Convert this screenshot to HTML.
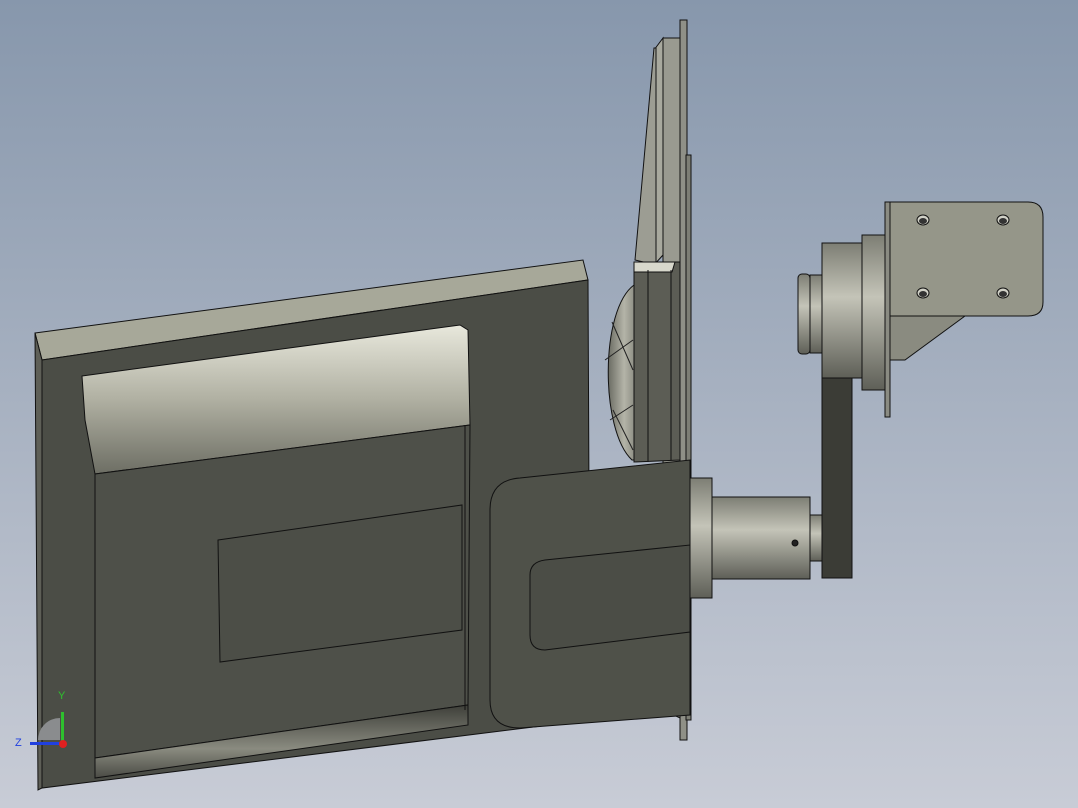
<!DOCTYPE html>
<html><head><style>html,body{margin:0;padding:0;width:1078px;height:808px;overflow:hidden}</style></head>
<body>
<svg width="1078" height="808" viewBox="0 0 1078 808" xmlns="http://www.w3.org/2000/svg" stroke="#111" stroke-width="1">
<defs>
<linearGradient id="bg" x1="0" y1="0" x2="0" y2="1"><stop offset="0" stop-color="#8797ac"/><stop offset="1" stop-color="#c8ccd6"/></linearGradient>
<linearGradient id="cyl" x1="0" y1="0" x2="0" y2="1"><stop offset="0" stop-color="#7d7e74"/><stop offset="0.4" stop-color="#c4c4b8"/><stop offset="1" stop-color="#5e5f57"/></linearGradient>
<linearGradient id="curve" x1="0" y1="0" x2="0" y2="1"><stop offset="0" stop-color="#e8e8dc"/><stop offset="0.5" stop-color="#b0b0a2"/><stop offset="1" stop-color="#6d6e64"/></linearGradient>
<linearGradient id="strip" x1="0" y1="0" x2="0" y2="1"><stop offset="0" stop-color="#3e3f39"/><stop offset="0.6" stop-color="#8a8b80"/><stop offset="1" stop-color="#4a4b45"/></linearGradient>
<linearGradient id="sph" x1="0" y1="0" x2="1" y2="0"><stop offset="0" stop-color="#6b6c63"/><stop offset="0.5" stop-color="#b4b4a8"/><stop offset="1" stop-color="#7a7b72"/></linearGradient>
</defs>
<rect width="1078" height="808" fill="url(#bg)" stroke="none"/>
<polygon points="680,20 687,20 687,740 680,740" fill="#8f9087"/>
<polygon points="663,38 680,38 680,718 663,710" fill="#999a90"/>
<polygon points="654,50 663,38 663,255 654,265" fill="#a8a99e"/>
<polygon points="635,260 654,48 656,48 656,265" fill="#9c9d93"/>
<polygon points="686,155 691,155 691,720 686,720" fill="#7d7e75"/>
<path d="M634,285 C600,310 600,430 632,460 L640,460 L640,285 Z" fill="url(#sph)"/>
<path d="M612,322 L633,370 M613,410 L633,450 M605,360 L633,340 M610,420 L633,405" fill="none" stroke="#222"/>
<polygon points="634,262 680,262 680,460 634,462" fill="#5c5d55"/>
<polygon points="634,262 675,262 672,272 634,272" fill="#d8d8cc"/>
<line x1="648" y1="270" x2="648" y2="462"/><line x1="671" y1="270" x2="671" y2="460"/>
<polygon points="35,333 583,260 588,280 42,360" fill="#a7a899"/>
<polygon points="35,333 42,360 42,788 38,790" fill="#5e5f57"/>
<polygon points="42,360 588,280 590,720 42,788" fill="#4b4d46"/>
<polygon points="82,376 460,325 468,330 470,425 95,474 85,420" fill="url(#curve)"/>
<polygon points="95,474 470,425 468,705 95,758" fill="#4e5049"/>
<polygon points="95,758 468,705 468,725 95,778" fill="url(#strip)"/>
<line x1="465" y1="425" x2="465" y2="710"/>
<polygon points="218,540 462,505 462,630 220,662" fill="#4c4e47"/>
<path d="M520,478 L690,460 L690,715 L520,728 Q490,728 490,700 L490,510 Q490,480 520,478 Z" fill="#4f5149"/>
<path d="M545,560 L690,545 L690,632 L545,650 Q530,650 530,635 L530,575 Q530,562 545,560 Z" fill="#4b4d46"/>
<rect x="690" y="478" width="22" height="120" fill="url(#cyl)"/>
<rect x="712" y="497" width="98" height="82" fill="url(#cyl)"/>
<rect x="810" y="515" width="14" height="46" fill="url(#cyl)"/>
<circle cx="795" cy="543" r="3" fill="#222"/>
<rect x="822" y="378" width="30" height="200" fill="#3b3c36"/>
<rect x="798" y="274" width="12" height="80" fill="url(#cyl)" rx="4"/>
<rect x="810" y="275" width="12" height="78" fill="url(#cyl)"/>
<rect x="822" y="243" width="40" height="135" fill="url(#cyl)"/>
<rect x="862" y="235" width="24" height="155" fill="url(#cyl)"/>
<polygon points="885,315 965,316 905,360 885,360" fill="#8a8b80"/>
<rect x="885" y="202" width="5" height="215" fill="#8a8b82"/>
<path d="M890,202 L1028,202 Q1043,202 1043,217 L1043,302 Q1043,316 1028,316 L890,316 Z" fill="#959689"/>
<g fill="#d0d0c6">
<ellipse cx="923" cy="220" rx="6" ry="5"/><ellipse cx="1003" cy="220" rx="6" ry="5"/>
<ellipse cx="923" cy="293" rx="6" ry="5"/><ellipse cx="1003" cy="293" rx="6" ry="5"/>
</g>
<g fill="#333" stroke="none">
<ellipse cx="923" cy="221" rx="4" ry="3"/><ellipse cx="1003" cy="221" rx="4" ry="3"/>
<ellipse cx="923" cy="294" rx="4" ry="3"/><ellipse cx="1003" cy="294" rx="4" ry="3"/>
</g>
<g stroke="none">
<path d="M38,740 A22,22 0 0 1 60,718 L60,740 Z" fill="#8a8c8e"/>
<rect x="61" y="712" width="3" height="30" fill="#2ec02e"/>
<rect x="30" y="742" width="32" height="3" fill="#2040e0"/>
<circle cx="63" cy="744" r="4" fill="#e02020"/>
<text x="58" y="699" font-family="Liberation Sans, sans-serif" font-size="11" fill="#2ec02e">Y</text>
<text x="15" y="746" font-family="Liberation Sans, sans-serif" font-size="11" fill="#2040e0">Z</text>
</g>
</svg>
</body></html>
